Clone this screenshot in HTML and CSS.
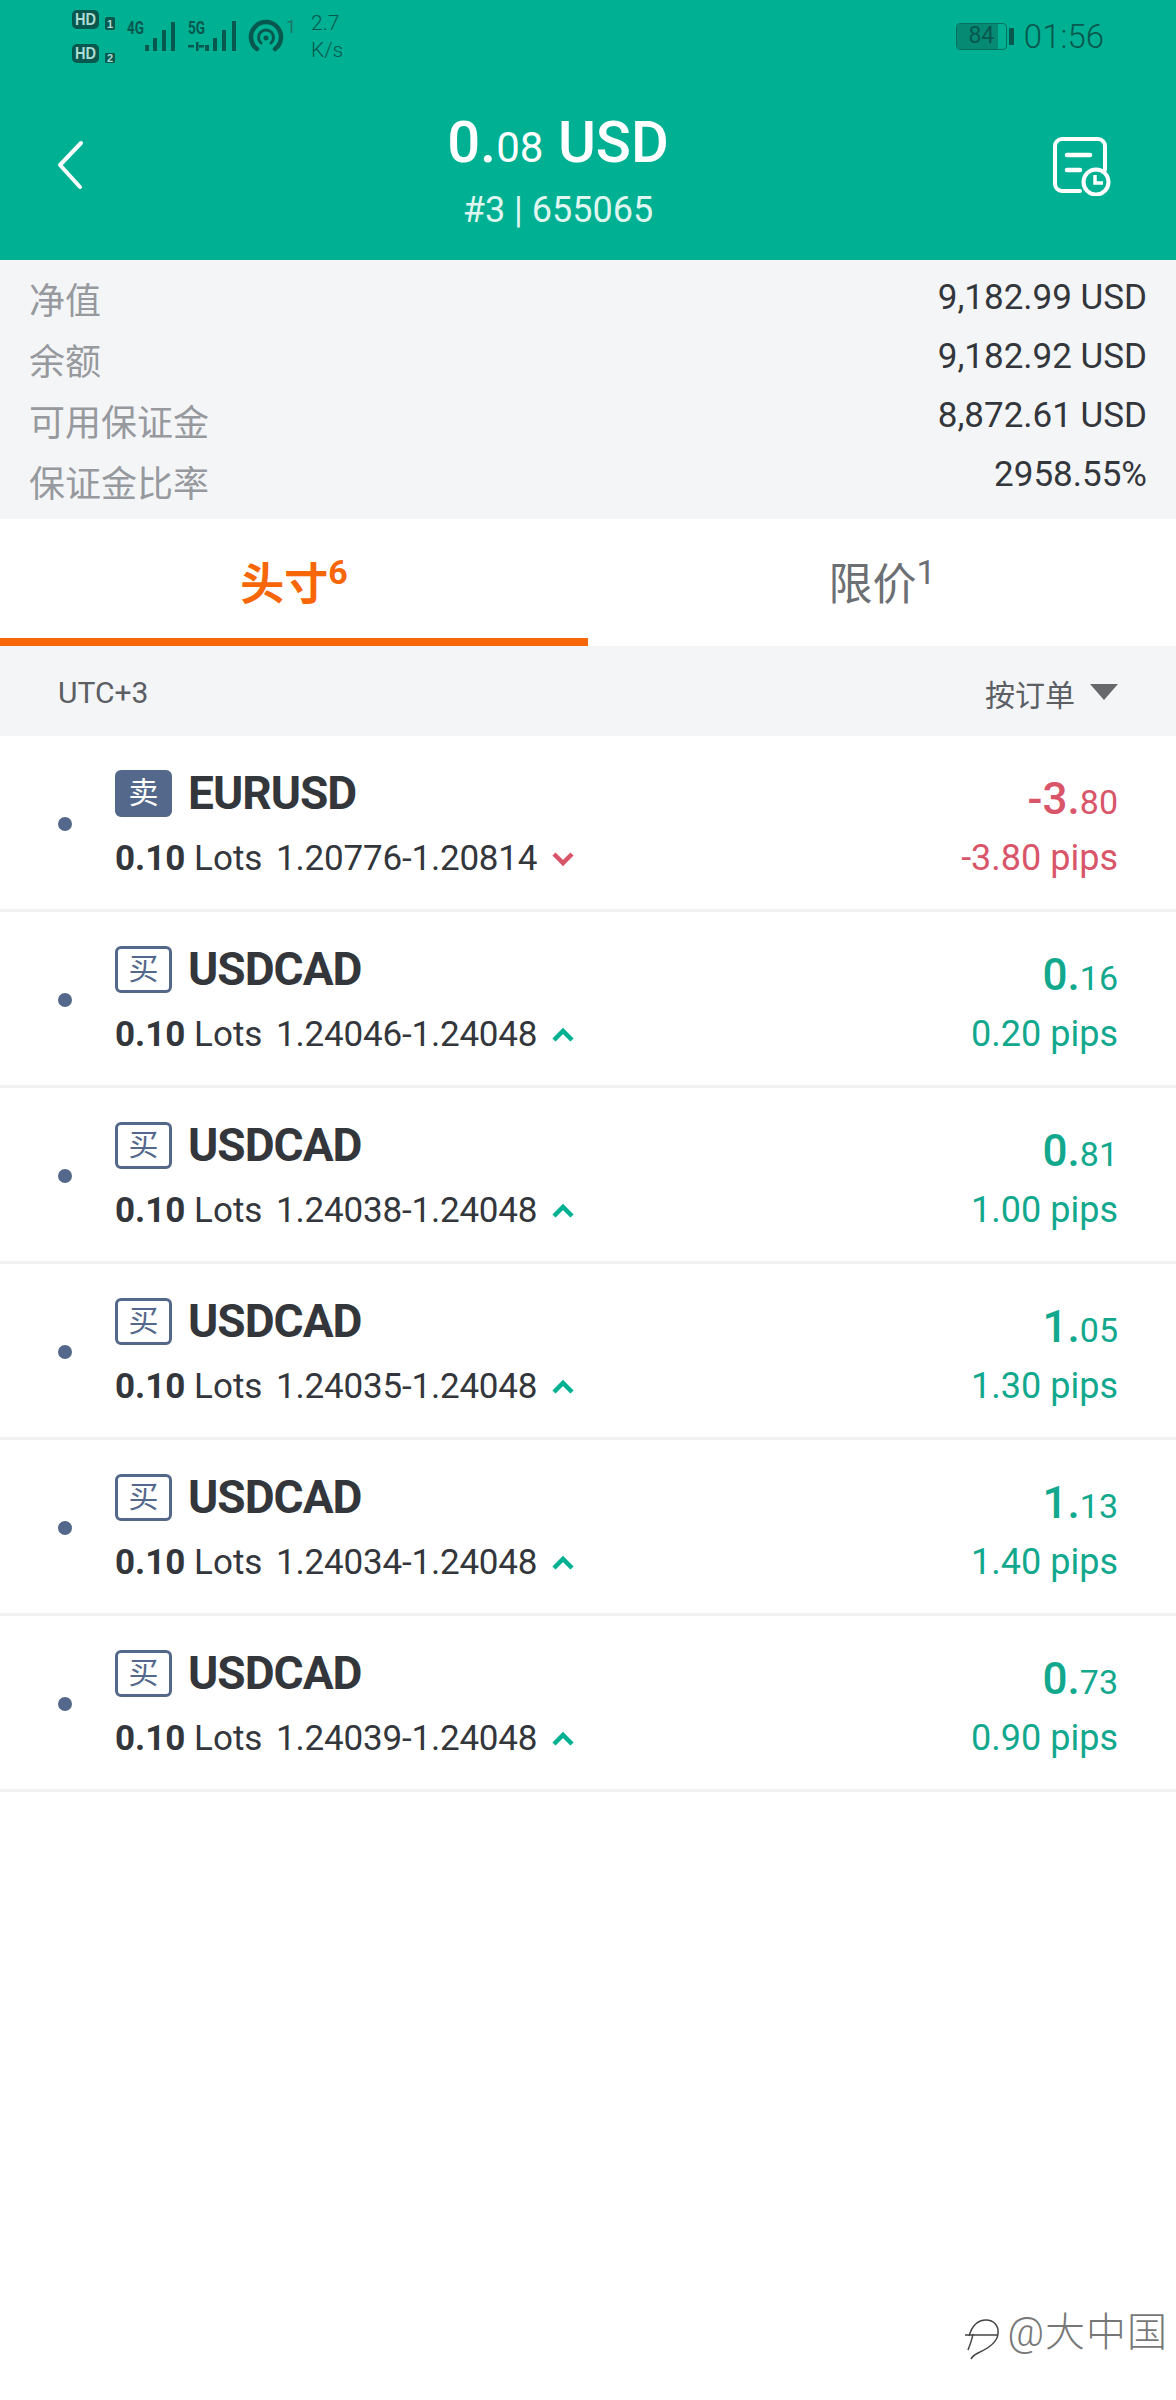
FILE: index.html
```html
<!DOCTYPE html>
<html lang="zh">
<head>
  <meta charset="UTF-8" />
  <title>Positions</title>
  <link rel="stylesheet" href="styles.css">
</head>
<body>
  <div id="top-area">
    <div id="status-bar">
      <div class="status-left">
        <svg class="status-icons" width="230" height="72" viewBox="70 0 230 72">
          <g fill="#07584e">
            <rect x="72" y="10" width="27" height="19" rx="5"/>
            <rect x="105" y="17" width="10" height="13" rx="2"/>
            <rect x="72" y="44" width="27" height="19" rx="5"/>
            <rect x="105" y="53" width="10" height="10" rx="1"/>
            <rect x="145" y="45" width="4" height="6"/><rect x="153" y="38" width="4" height="13"/><rect x="162" y="30" width="4" height="21"/><rect x="171" y="22" width="4" height="29"/>
            <rect x="205" y="45" width="4" height="6"/><rect x="213" y="38" width="4" height="13"/><rect x="222" y="30" width="4" height="21"/><rect x="232" y="21" width="4" height="30"/>
            <rect x="188" y="45" width="6" height="2.500"/><rect x="196" y="42" width="2.500" height="9"/><rect x="199" y="45" width="5" height="2.500"/>
          </g>
          <g fill="#acdcd3" font-family="'Liberation Sans', sans-serif" font-weight="700" font-size="17">
            <text x="75" y="25" textLength="21" lengthAdjust="spacingAndGlyphs">HD</text>
            <text x="75" y="59" textLength="21" lengthAdjust="spacingAndGlyphs">HD</text>
            <text x="107" y="28" font-size="11">1</text>
            <text x="107" y="62" font-size="11">2</text>
          </g>
          <g fill="#07584e" font-family="'Roboto', sans-serif" font-weight="700" font-size="18">
            <text x="127" y="34" textLength="17" lengthAdjust="spacingAndGlyphs">4G</text>
            <text x="188" y="34" textLength="17" lengthAdjust="spacingAndGlyphs">5G</text>
          </g>
          <g fill="none" stroke="#07584e" stroke-linecap="round">
            <path d="M257 49a15 15 0 1 1 18 0" stroke-width="4.500"/>
            <path d="M261 43a7.500 7.500 0 1 1 10 0" stroke-width="3"/>
          </g>
          <circle cx="266" cy="38" r="2.500" fill="#07584e"/>
          <text x="286" y="33" fill="#1f7768" font-family="'Roboto', sans-serif" font-size="18">1</text>
        </svg>
        <div class="net-speed"><span>2.7</span><span>K/s</span></div>
      </div>
      <div class="status-right">
        <div class="battery"><span class="battery-fill"></span><span class="battery-num">84</span></div>
        <span class="battery-cap"></span>
        <span class="clock">01:56</span>
      </div>
    </div>
    <div id="title-bar">
      <svg class="back-icon" width="28" height="50" viewBox="0 0 28 50"><path d="M25 3 4 25l20 22" fill="none" stroke="#fff" stroke-width="4" stroke-linecap="round" stroke-linejoin="round"/></svg>
      <div class="title-block">
        <div class="title-amount">0.<span class="small-dec">08</span> USD</div>
        <div class="title-sub">#3 | 655065</div>
      </div>
      <svg class="history-icon" width="60" height="62" viewBox="0 0 60 62">
        <path d="M28 57H10a7 7 0 0 1-7-7V12a7 7 0 0 1 7-7h36a7 7 0 0 1 7 7v24" fill="none" stroke="#fff" stroke-width="4" stroke-linecap="round"/>
        <path d="M15 21h23M15 36h13" stroke="#fff" stroke-width="4.500" stroke-linecap="round"/>
        <circle cx="44" cy="48" r="12.500" fill="#00b092" stroke="#fff" stroke-width="4"/>
        <path d="M43 41v8h8" fill="none" stroke="#fff" stroke-width="3.500"/>
      </svg>
    </div>
  </div>

  <div id="account-box">
    <div class="account-labels">
      <div>净值</div>
      <div>余额</div>
      <div>可用保证金</div>
      <div>保证金比率</div>
    </div>
    <div class="account-values">
      <div>9,182.99 USD</div>
      <div>9,182.92 USD</div>
      <div>8,872.61 USD</div>
      <div>2958.55%</div>
    </div>
  </div>

  <div id="tabs">
    <div class="tab active">头寸<sup>6</sup></div>
    <div class="tab">限价<sup>1</sup></div>
  </div>

  <div id="filter-bar">
    <span>UTC+3</span>
    <span class="sort-by">按订单<span class="sort-caret"></span></span>
  </div>

  <div id="orders">
    <div class="order">
      <span class="dot"></span>
      <div class="order-main">
        <div class="order-head"><span class="side side-sell">卖</span><span class="symbol">EURUSD</span></div>
        <div class="order-info"><b>0.10</b> Lots <span class="prices">1.20776-1.20814</span>
          <svg class="trend" width="24" height="16" viewBox="0 0 24 16"><path d="M3 3l9 9 9-9" class="trend-down"/></svg></div>
      </div>
      <div class="order-pl loss">
        <div class="pl-amount">-3.<span class="small-dec">80</span></div>
        <div class="pl-pips">-3.80 pips</div>
      </div>
    </div>
    <div class="order">
      <span class="dot"></span>
      <div class="order-main">
        <div class="order-head"><span class="side">买</span><span class="symbol">USDCAD</span></div>
        <div class="order-info"><b>0.10</b> Lots <span class="prices">1.24046-1.24048</span>
          <svg class="trend" width="24" height="16" viewBox="0 0 24 16"><path d="M3 13l9-9 9 9" class="trend-up"/></svg></div>
      </div>
      <div class="order-pl gain">
        <div class="pl-amount">0.<span class="small-dec">16</span></div>
        <div class="pl-pips">0.20 pips</div>
      </div>
    </div>
    <div class="order">
      <span class="dot"></span>
      <div class="order-main">
        <div class="order-head"><span class="side">买</span><span class="symbol">USDCAD</span></div>
        <div class="order-info"><b>0.10</b> Lots <span class="prices">1.24038-1.24048</span>
          <svg class="trend" width="24" height="16" viewBox="0 0 24 16"><path d="M3 13l9-9 9 9" class="trend-up"/></svg></div>
      </div>
      <div class="order-pl gain">
        <div class="pl-amount">0.<span class="small-dec">81</span></div>
        <div class="pl-pips">1.00 pips</div>
      </div>
    </div>
    <div class="order">
      <span class="dot"></span>
      <div class="order-main">
        <div class="order-head"><span class="side">买</span><span class="symbol">USDCAD</span></div>
        <div class="order-info"><b>0.10</b> Lots <span class="prices">1.24035-1.24048</span>
          <svg class="trend" width="24" height="16" viewBox="0 0 24 16"><path d="M3 13l9-9 9 9" class="trend-up"/></svg></div>
      </div>
      <div class="order-pl gain">
        <div class="pl-amount">1.<span class="small-dec">05</span></div>
        <div class="pl-pips">1.30 pips</div>
      </div>
    </div>
    <div class="order">
      <span class="dot"></span>
      <div class="order-main">
        <div class="order-head"><span class="side">买</span><span class="symbol">USDCAD</span></div>
        <div class="order-info"><b>0.10</b> Lots <span class="prices">1.24034-1.24048</span>
          <svg class="trend" width="24" height="16" viewBox="0 0 24 16"><path d="M3 13l9-9 9 9" class="trend-up"/></svg></div>
      </div>
      <div class="order-pl gain">
        <div class="pl-amount">1.<span class="small-dec">13</span></div>
        <div class="pl-pips">1.40 pips</div>
      </div>
    </div>
    <div class="order">
      <span class="dot"></span>
      <div class="order-main">
        <div class="order-head"><span class="side">买</span><span class="symbol">USDCAD</span></div>
        <div class="order-info"><b>0.10</b> Lots <span class="prices">1.24039-1.24048</span>
          <svg class="trend" width="24" height="16" viewBox="0 0 24 16"><path d="M3 13l9-9 9 9" class="trend-up"/></svg></div>
      </div>
      <div class="order-pl gain">
        <div class="pl-amount">0.<span class="small-dec">73</span></div>
        <div class="pl-pips">0.90 pips</div>
      </div>
    </div>
  </div>

  <div class="watermark">
    <svg class="watermark-logo" width="38" height="44" viewBox="0 0 38 44"><path d="M5 18C8 8 14 2 22 2c8 0 13 6 12 14-1 9-11 15-20 19-4 2-6 4-7 6M1 17h33M9 16c-1 6-3 11-5 16" fill="none" stroke="#444" stroke-width="1.500"/></svg>
    <span>@大中国</span>
  </div>
</body>
</html>
```

FILE: styles.css
```css
:root {
  --green: #00b092;
  --green-text: #12a88d;
  --ink: #33363b;
  --panel: #f4f5f7;
  --orange: #f76707;
  --red: #d9566a;
  --slate: #53688a;
  --font: "Roboto", "Noto Sans CJK SC", sans-serif;
}
body {
  margin: 0;
  height: 2400px;
  position: relative;
  overflow: hidden;
  background: #fff;
  color: var(--ink);
  font-family: var(--font);
}
#top-area {
  height: 260px;
  background: var(--green);
  color: #fff;
}
#status-bar {
  display: flex;
  justify-content: space-between;
  height: 72px;
  padding: 0 72px 0 70px;
  color: #07584e;
}
.status-left {
  display: flex;
  align-items: flex-start;
}
.status-icons {
  flex: none;
}
.net-speed {
  display: flex;
  flex-direction: column;
  margin: 10px 0 0 11px;
  font-size: 21px;
  line-height: 27px;
  font-weight: 300;
}
.status-right {
  display: flex;
  align-items: center;
  height: 72px;
}
.battery {
  position: relative;
  width: 51px;
  height: 27px;
  box-sizing: border-box;
  border: 1.500px solid #07705f;
  border-radius: 4px;
  font-size: 23px;
  line-height: 24px;
  text-align: center;
}
.battery-fill {
  position: absolute;
  left: 0;
  top: 0;
  bottom: 0;
  width: 84%;
  border-radius: 3px 0 0 3px;
  background: #068a74;
}
.battery-num {
  position: relative;
}
.battery-cap {
  width: 5px;
  height: 17px;
  margin: 0 10px 0 2px;
  background: #07584e;
  border-radius: 1px;
}
.clock {
  font-size: 33px;
  font-weight: 300;
}
#title-bar {
  display: flex;
  justify-content: space-between;
  align-items: flex-start;
  padding: 0 64px 0 56px;
  height: 188px;
}
.back-icon {
  margin-top: 68px;
}
.title-block {
  text-align: center;
  margin: 40px 20px 0 0;
}
.title-amount {
  font-size: 58px;
  line-height: 60px;
  font-weight: 500;
}
.title-amount .small-dec {
  font-size: 42px;
  font-weight: 400;
}
.title-sub {
  font-size: 36px;
  line-height: 42px;
  margin-top: 11px;
  color: #dff5f0;
}
.history-icon {
  margin-top: 62px;
}
#account-box {
  display: flex;
  justify-content: space-between;
  height: 259px;
  box-sizing: border-box;
  padding: 0 29px;
  background: var(--panel);
}
.account-labels {
  color: #96999e;
  font-size: 36px;
  padding-top: 19px;
}
.account-labels div {
  height: 61px;
  line-height: 46px;
}
.account-values {
  text-align: right;
  font-size: 35px;
  padding-top: 15px;
}
.account-values div {
  height: 59px;
  line-height: 46px;
}
#tabs {
  display: flex;
  height: 127px;
}
.tab {
  flex: 1;
  padding-top: 4px;
  text-align: center;
  font-size: 44px;
  line-height: 124px;
  color: #6c6f73;
}
.tab.active {
  color: var(--orange);
  font-weight: 700;
  border-bottom: 8px solid var(--orange);
}
.tab sup {
  font-size: 34px;
  line-height: 0;
  vertical-align: 16px;
}
#filter-bar {
  display: flex;
  justify-content: space-between;
  align-items: center;
  height: 90px;
  box-sizing: border-box;
  padding: 3px 58px 0;
  background: var(--panel);
  font-size: 30px;
  color: #5b5e63;
}
.sort-by {
  display: flex;
  align-items: center;
}
.sort-caret {
  margin: -2px 0 0 15px;
  border-left: 14px solid transparent;
  border-right: 14px solid transparent;
  border-top: 16px solid #66686c;
}
.order {
  display: flex;
  align-items: center;
  height: 176px;
  box-sizing: border-box;
  padding: 0 58px;
  border-bottom: 3px solid #f1f1f1;
}
.dot {
  width: 14px;
  height: 14px;
  border-radius: 50%;
  background: var(--slate);
  margin-right: 43px;
  margin-top: 2px;
}
.order-main {
  flex: 1;
  padding-top: 6px;
}
.order-head {
  display: flex;
  align-items: center;
  height: 48px;
  gap: 16px;
}
.side {
  width: 57px;
  height: 47px;
  box-sizing: border-box;
  border: 3px solid var(--slate);
  border-radius: 6px;
  color: var(--slate);
  font-size: 30px;
  line-height: 40px;
  text-align: center;
}
.side-sell {
  background: var(--slate);
  color: #fff;
}
.symbol {
  font-size: 46px;
  font-weight: 700;
  letter-spacing: -1px;
}
.order-info {
  display: flex;
  align-items: center;
  margin-top: 19px;
  font-size: 35px;
  line-height: 46px;
  white-space: pre;
}
.order-info b {
  font-weight: 700;
}
.prices {
  margin-left: 5px;
  letter-spacing: -0.2px;
}
.trend {
  margin-left: 14px;
}
.trend path {
  fill: none;
  stroke-width: 4.500px;
}
.trend-up {
  stroke: var(--green);
}
.trend-down {
  stroke: var(--red);
}
.order-pl {
  padding-top: 8px;
  text-align: right;
}
.pl-amount {
  font-size: 44px;
  line-height: 52px;
  font-weight: 500;
}
.pl-amount .small-dec {
  font-size: 34px;
  font-weight: 400;
}
.pl-pips {
  font-size: 36px;
  line-height: 46px;
  margin-top: 7px;
}
.loss {
  color: var(--red);
}
.gain {
  color: var(--green-text);
}
.watermark {
  position: absolute;
  right: 8px;
  top: 2310px;
  display: flex;
  align-items: flex-start;
  gap: 5px;
  font-size: 40px;
  line-height: 46px;
  font-weight: 300;
  letter-spacing: 1px;
  color: #777;
}
.watermark-logo {
  margin-top: 8px;
}
```
